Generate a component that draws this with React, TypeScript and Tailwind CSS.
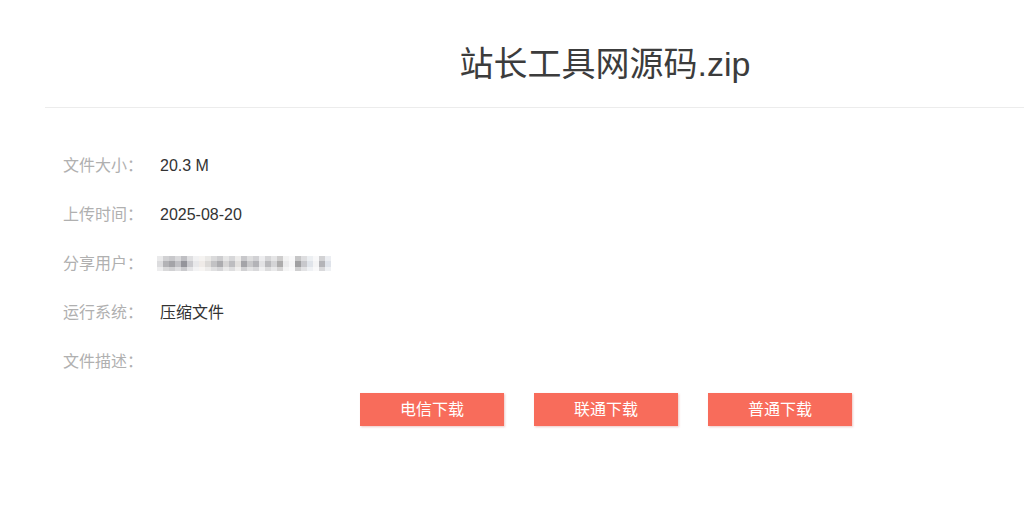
const fileInfo = [
  { label: '文件大小：', value: '20.3 M' },
  { label: '上传时间：', value: '2025-08-20' },
  { label: '分享用户：', value: null },
  { label: '运行系统：', value: '压缩文件' },
  { label: '文件描述：', value: '' },
];

// mosaic blocks standing in for the masked user name
const mosaic: [number, string][] = [
  [6, '#dcdcde'], [6, '#b3b3b6'], [6, '#a4a4a8'], [6, '#c0c0c4'], [6, '#95959b'], [6, '#cacace'],
  [6, '#e8e8ea'], [6, '#efebe8'], [6, '#dcdad8'], [6, '#c2c2c4'], [6, '#acacaf'], [6, '#d6d5d5'],
  [6, '#bdbdc0'], [6, '#e2e0de'], [6, '#a4a4a8'], [6, '#c8c8ca'], [6, '#b3b3b7'], [6, '#e2e2e4'],
  [6, '#b9b9bc'], [6, '#d4d4d6'], [6, '#adacac'], [6, '#ebebec'], [6, '#f6f6f7'], [6, '#a0a0a2'],
  [6, '#c8c8cc'], [6, '#e0e4ea'], [6, '#f4f4f5'], [6, '#b4b4b8'], [6, '#dfe3ea'],
];

const buttons = ['电信下载', '联通下载', '普通下载'];

export default function App() {
  return (
    <div
      className="w-full overflow-hidden bg-white min-h-[506px]"
      style={{ fontFamily: '"Liberation Sans", "Noto Sans CJK SC", sans-serif' }}
    >
      <div className="ml-[45px] w-[1120px]">
        <div className="h-[108px] pt-[20px] border-b border-[#ececec] flex items-center justify-center">
          <h1 className="text-[34px] leading-none text-[#3c3c3c]">站长工具网源码.zip</h1>
        </div>

        <div className="pl-[18px] pt-[33px]">
          {fileInfo.map((row) => (
            <div key={row.label} className="h-[49px] flex items-center text-[16px]">
              <div className="w-[97px] text-[#b0b0b0]">{row.label}</div>
              {row.value === null ? (
                <div className="flex flex-col ml-[-3px] blur-[0.6px]">
                  <div className="flex h-[5px] opacity-60">
                    {mosaic.map(([w, c], i) => (
                      <span key={i} style={{ width: w, background: c }} />
                    ))}
                  </div>
                  <div className="flex h-[6px]">
                    {mosaic.map(([w, c], i) => (
                      <span key={i} style={{ width: w, background: c }} />
                    ))}
                  </div>
                  <div className="flex h-[4px] opacity-50">
                    {mosaic.map(([w, c], i) => (
                      <span key={i} style={{ width: w, background: c }} />
                    ))}
                  </div>
                </div>
              ) : (
                <div className="text-[#333]">{row.value}</div>
              )}
            </div>
          ))}
        </div>

        <div className="flex justify-center gap-[30px] mt-[7px] pl-[2px]">
          {buttons.map((b) => (
            <button
              key={b}
              className="w-[144px] h-[33px] bg-[#f86c5b] text-white text-[16px] shadow-[1px_1px_2px_rgba(200,100,90,0.35)]"
            >
              {b}
            </button>
          ))}
        </div>
      </div>
    </div>
  );
}
